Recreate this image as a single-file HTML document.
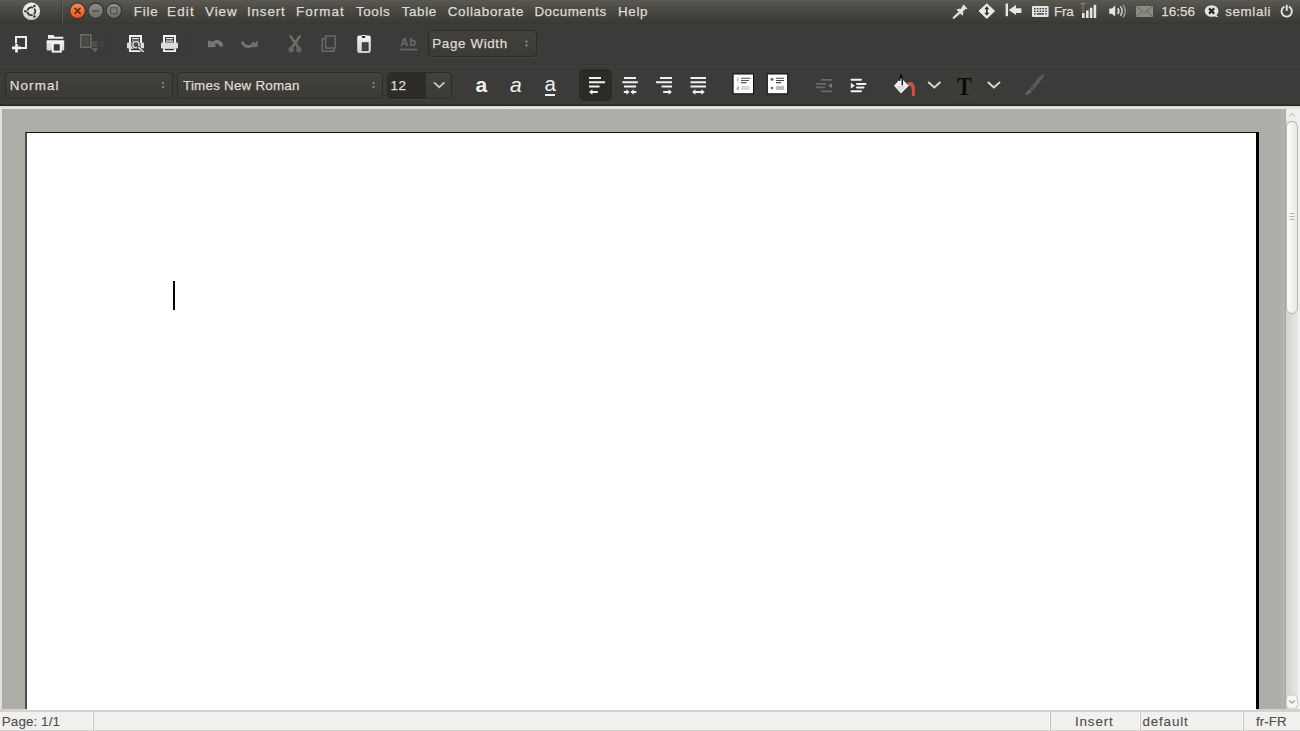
<!DOCTYPE html>
<html><head><meta charset="utf-8"><title>AbiWord</title>
<style>
html,body{margin:0;padding:0;width:1300px;height:731px;overflow:hidden;background:#3c3b37;}
body{position:relative;font-family:"Liberation Sans",sans-serif;font-size:13.4px;color:#dfdbd2;}
.a{position:absolute;}
.t{position:absolute;white-space:nowrap;line-height:20px;height:20px;-webkit-text-stroke:.25px currentColor;}
#panel{left:0;top:0;width:1300px;height:24px;background:linear-gradient(#5a5950 0,#4c4b46 8px,#42413c 16px,#393834 24px);}
#tb{left:0;top:24px;width:1300px;height:82px;background:#3b3b39;}
.combo{position:absolute;border:1px solid #2c2b28;border-radius:4px;background:linear-gradient(#42413c,#3b3a36);box-sizing:border-box;box-shadow:0 1px 0 rgba(255,255,255,.05);}
.sep{position:absolute;width:1px;background:#373735;box-shadow:1px 0 0 #3f3f3d;}
#doc{left:0;top:109px;width:1286px;height:601px;background:linear-gradient(#b1aeac,#aeada8 3px);}
#page{left:25px;top:132px;width:1231px;height:578px;background:#fff;border-left:2px solid #4d4c48;border-top:1px solid #111;box-sizing:border-box;}
#status{left:0;top:712px;width:1300px;height:19px;background:#f1f0ee;color:#4c4c4c;}
</style></head><body>
<div class="a" id="panel"></div>
<div class="a" id="tb"></div>
<!-- menu -->
<div id="menu">
<span class="t" style="left:133.8px;top:2.4px;letter-spacing:0.757px">File</span>
<span class="t" style="left:167px;top:2.4px;letter-spacing:1.215px">Edit</span>
<span class="t" style="left:205px;top:2.4px;letter-spacing:0.963px">View</span>
<span class="t" style="left:247px;top:2.4px;letter-spacing:0.846px">Insert</span>
<span class="t" style="left:296px;top:2.4px;letter-spacing:1.062px">Format</span>
<span class="t" style="left:356px;top:2.4px;letter-spacing:0.609px">Tools</span>
<span class="t" style="left:401.8px;top:2.4px;letter-spacing:0.584px">Table</span>
<span class="t" style="left:447.7px;top:2.4px;letter-spacing:0.716px">Collaborate</span>
<span class="t" style="left:534.4px;top:2.4px;letter-spacing:0.496px">Documents</span>
<span class="t" style="left:618px;top:2.4px;letter-spacing:0.636px">Help</span>
</div>
<!-- panel right text -->
<span class="t" style="left:1054px;top:2.4px;letter-spacing:-0.219px">Fra</span>
<span class="t" style="left:1161.3px;top:2.4px;letter-spacing:0.059px">16:56</span>
<span class="t" style="left:1225.3px;top:2.4px;letter-spacing:0.584px">semlali</span>
<svg class="a" style="left:0;top:0" width="1300" height="24" viewBox="0 0 1300 24">
<defs>
<linearGradient id="gw" x1="0" y1="0" x2="0" y2="1"><stop offset="0" stop-color="#f4f4f2"/><stop offset="1" stop-color="#cfcfcc"/></linearGradient>
<linearGradient id="gc" x1="0" y1="0" x2="0" y2="1"><stop offset="0" stop-color="#f58a5a"/><stop offset="1" stop-color="#e9561c"/></linearGradient>
<linearGradient id="gg" x1="0" y1="0" x2="0" y2="1"><stop offset="0" stop-color="#8d8c86"/><stop offset="1" stop-color="#6d6c66"/></linearGradient>
</defs>
<!-- ubuntu logo -->
<circle cx="31.4" cy="11.3" r="8.7" fill="url(#gw)"/>
<circle cx="31.4" cy="11.3" r="3.9" fill="none" stroke="#33322e" stroke-width="1.7" stroke-dasharray="6.9 1.268" stroke-dashoffset="3.45"/>
<circle cx="25.400" cy="11.3" r="1.25" fill="#33322e"/><circle cx="34.400" cy="6.100" r="1.25" fill="#33322e"/><circle cx="34.400" cy="16.500" r="1.25" fill="#33322e"/>
<rect x="61" y="0" width="1" height="24" fill="#3a3934" opacity=".6"/><rect x="62" y="0" width="1" height="24" fill="#66655c" opacity=".6"/>
<!-- window buttons -->
<circle cx="77.5" cy="10.8" r="8.2" fill="#35342f"/><circle cx="77.5" cy="10.8" r="7.2" fill="url(#gc)"/>
<path d="M75 8.3l5 5M80 8.3l-5 5" stroke="#5a2410" stroke-width="1.6" stroke-linecap="round"/>
<circle cx="95.7" cy="10.8" r="8.2" fill="#35342f"/><circle cx="95.7" cy="10.8" r="7.1" fill="url(#gg)"/>
<rect x="92.2" y="10" width="7" height="1.8" fill="#55544f"/>
<circle cx="113.8" cy="10.8" r="8.2" fill="#35342f"/><circle cx="113.8" cy="10.8" r="7.1" fill="url(#gg)"/>
<rect x="110.6" y="7.8" width="6.4" height="6" fill="none" stroke="#55544f" stroke-width="1.3"/>
<!-- pin -->
<g fill="#e4e2dc"><path d="M952.500 18.900l.5-1.800 5.600-5.400 1.700 1.700-5.800 5.100z"/><path d="M956.400 9.600c1.400-1 3-1.200 4.200-.6l2.400-3.400c-.4-.6-.2-1.200 .4-1.400l4 4.200c-.2 .6-.8 .8-1.400 .4l-3.200 2.600c.8 1.400 .6 3-.4 4.400z"/></g>
<!-- diamond -->
<path d="M986.800 3.800l7.800 7.200-7.800 7.400-7.800-7.400z" fill="#ebe9e4" stroke="#ebe9e4" stroke-width="1" stroke-linejoin="round"/>
<path d="M986.800 6.200l2.400 3h-1.600v3.600h1.600l-2.400 3-2.400-3h1.600v-3.600h-1.600z" fill="#2b2a26"/>
<!-- |<- -->
<rect x="1005.600" y="3.600" width="2.400" height="12.600" fill="#e9e7e2"/>
<path d="M1008.600 10l7.400-5v3.200h5.400v4.800h-5.400v2z" fill="#e9e7e2"/>
<!-- keyboard -->
<rect x="1032" y="6" width="16.600" height="11" rx="1" fill="#e6e4de"/>
<g fill="#3a3934"><rect x="1034" y="8" width="1.600" height="1.400"/><rect x="1036.800" y="8" width="1.600" height="1.400"/><rect x="1039.600" y="8" width="1.600" height="1.400"/><rect x="1042.400" y="8" width="1.600" height="1.400"/><rect x="1045.200" y="8" width="1.600" height="1.400"/>
<rect x="1034" y="10.600" width="1.600" height="1.400"/><rect x="1036.800" y="10.600" width="1.600" height="1.400"/><rect x="1039.600" y="10.600" width="1.600" height="1.400"/><rect x="1042.400" y="10.600" width="1.600" height="1.400"/><rect x="1045.200" y="10.600" width="1.600" height="1.400"/>
<rect x="1034" y="13.200" width="1.600" height="1.400"/><rect x="1036.800" y="13.200" width="7.200" height="1.400"/><rect x="1045.200" y="13.200" width="1.600" height="1.400"/></g>
<!-- signal -->
<g fill="#e6e4de"><rect x="1082" y="13" width="2.600" height="5"/><rect x="1086" y="10.400" width="2.600" height="7.600"/><rect x="1089.800" y="7.800" width="2.600" height="10.200"/><rect x="1093.600" y="4.800" width="2.600" height="13.200"/></g>
<path d="M1080.500 3.500h5M1083 3.500v9" stroke="#8a8982" stroke-width="1" fill="none"/>
<!-- speaker -->
<path d="M1109.200 8.400h2.600l3.400-2.800v11l-3.400-2.800h-2.600z" fill="#e6e4de"/>
<path d="M1117.800 8.200q2 2.900 0 5.800" stroke="#e6e4de" stroke-width="1.600" fill="none"/>
<path d="M1120.400 6.400q3.400 4.700 0 9.400" stroke="#d0cec8" stroke-width="1.500" fill="none"/>
<path d="M1123 4.800q4.600 6.300 0 12.600" stroke="#a09e98" stroke-width="1.300" fill="none"/>
<!-- mail -->
<rect x="1136" y="6" width="17" height="11" fill="#8b8a83"/>
<path d="M1136.500 6.500l8 6.500 8-6.500M1136.500 16.500l5.500-5M1152.500 16.500l-5.500-5" stroke="#65645e" stroke-width="1" fill="none"/>
<!-- chat -->
<path d="M1216 14.500l2.600 3-4.400-1.200z" fill="#e6e4de"/>
<ellipse cx="1211.600" cy="11" rx="6" ry="4.900" fill="#e6e4de" stroke="#e6e4de" stroke-width="1.800"/>
<path d="M1209 8.400l5.200 5.200M1214.200 8.400l-5.200 5.200" stroke="#2a2925" stroke-width="2.200"/>
<!-- power -->
<path d="M1283.900 7a5.200 5.200 0 1 0 5.600 0" stroke="#e6e4de" stroke-width="1.900" fill="none" stroke-linecap="round"/>
<rect x="1285.800" y="4.800" width="1.900" height="6.200" rx=".8" fill="#e6e4de"/>
</svg>

<!-- toolbar 1 -->
<div class="sep" style="left:111px;top:32px;height:24px"></div>
<div class="sep" style="left:191px;top:32px;height:24px"></div>
<div class="sep" style="left:272px;top:32px;height:24px"></div>
<div class="combo" style="left:428px;top:30px;width:109px;height:27px"></div>
<span class="t" style="left:432.3px;top:34.4px;letter-spacing:0.625px">Page Width</span>
<!-- toolbar 2 -->
<div class="a" style="left:0;top:64px;width:1300px;height:1px;background:#363534"></div>
<div class="a" style="left:0;top:65px;width:1300px;height:1px;background:#3f3f3c"></div>
<div class="combo" style="left:5px;top:72px;width:168px;height:27px"></div>
<span class="t" style="left:9.8px;top:75.7px;letter-spacing:1.104px">Normal</span>
<div class="combo" style="left:177px;top:72px;width:206px;height:27px"></div>
<span class="t" style="left:183px;top:75.7px;letter-spacing:0.221px">Times New Roman</span>
<div class="combo" style="left:387px;top:72px;width:65px;height:27px"></div>
<div class="a" style="left:388px;top:73px;width:38px;height:25px;background:#2d2c29;border-radius:3px 0 0 3px"></div>
<span class="t" style="left:390.5px;top:75.7px;letter-spacing:0.453px">12</span>
<div class="a" style="left:579px;top:69px;width:33px;height:32px;background:#2b2a27;border-radius:5px"></div>
<div class="sep" style="left:722px;top:74px;height:24px"></div>
<div class="sep" style="left:803px;top:74px;height:24px"></div>
<div class="sep" style="left:880px;top:74px;height:24px"></div>
<div class="sep" style="left:1012px;top:74px;height:24px"></div>
<!-- TB-START --><svg class="a" style="left:0;top:24px" width="1300" height="82" viewBox="0 24 1300 82">
<defs>
<linearGradient id="gi" x1="0" y1="0" x2="0" y2="1"><stop offset="0" stop-color="#f6f6f6"/><stop offset="1" stop-color="#cdcdcd"/></linearGradient>
</defs>
<!-- new -->
<path d="M16 43.500v-6.500h10v11h-5" fill="none" stroke="#ededed" stroke-width="2"/>
<path d="M12 47.900h9M16.500 44v8.500" stroke="#f2f2f2" stroke-width="2.600" fill="none"/>
<!-- open -->
<path d="M48 35h5.500l1 1.700h8.800v2.100h-15.300z" fill="#efefef"/>
<rect x="46.600" y="40.300" width="17.600" height="10.300" rx="1" fill="url(#gi)"/>
<rect x="52.750" y="43.250" width="8" height="8.400" fill="#3a3a37" stroke="#f2f2f2" stroke-width="2"/>
<rect x="51.750" y="41.300" width="10" height="1.500" fill="#f2f2f2"/>
<path d="M47.500 44h3.500M47.500 46h3.500" stroke="#d0d0d0" stroke-width=".7"/>
<!-- save disabled -->
<g stroke="#6b6b68" fill="none"><rect x="80.800" y="34.800" width="10" height="12.400" stroke-width="1.600"/>
<path d="M92 42h5.200M92 44h5.200M92 46h5.200" stroke-width=".9"/><path d="M98.500 42h5M98.500 44h5M98.500 46h5" stroke-width=".9" stroke-dasharray="1 1" opacity=".55"/></g>
<rect x="82.500" y="36.500" width="6.600" height="9" fill="#4a4a47"/>
<path d="M91.400 48h6.800l-3.400 4.600z" fill="#62625f"/>
<!-- print preview --><g>
<rect x="129" y="35" width="13" height="8" fill="#f1f1f1"/>
<rect x="131" y="37" width="9" height="6" fill="#3a3a37"/>
<rect x="132" y="38" width="7" height="1.200" fill="#f0f0f0"/><rect x="132" y="40.500" width="7" height="1.200" fill="#f0f0f0"/>
<rect x="127" y="42.500" width="17" height="6" rx="1.300" fill="#dcdcdc"/>
<rect x="129" y="48.400" width="13" height="3.600" fill="#f1f1f1"/>
<rect x="131" y="49" width="9" height="1.200" fill="#2e2e2c"/>

<circle cx="136" cy="44.700" r="4.700" fill="#3a3a37"/>
<circle cx="136" cy="44.700" r="3.100" fill="#4a4a48" stroke="#d6d6d6" stroke-width="1.500"/>
<path d="M138.800 47.600l4.400 3.900" stroke="#3a3a37" stroke-width="3.200" stroke-linecap="round"/>
<path d="M138.800 47.600l4.400 3.900" stroke="#e4e4e4" stroke-width="1.600" stroke-linecap="round"/>
</g>
<!-- print --><g>
<rect x="163" y="35" width="13" height="8" fill="#f1f1f1"/>
<rect x="165" y="37" width="9" height="6" fill="#3a3a37"/>
<rect x="166" y="38" width="7" height="1.200" fill="#f0f0f0"/><rect x="166" y="40.500" width="7" height="1.200" fill="#f0f0f0"/>
<rect x="161" y="42.500" width="17" height="6" rx="1.300" fill="#dcdcdc"/>
<rect x="163" y="48.400" width="13" height="3.600" fill="#f1f1f1"/>
<rect x="165" y="49" width="9" height="1.200" fill="#2e2e2c"/>
</g>
<!-- undo -->
<path d="M208 47.200v-6.800l4.600 1.400c2.800-2.400 6.400-2.200 8.600-.2 1.400 1.400 2 3.200 2 5l-3.600 .2c-.2-1.400-.8-2.600-2.200-3-1.400-.4-2.600 .4-2.600 .4l1.400 2.800z" fill="#777775"/>
<!-- redo -->
<path d="M257.600 40v7l-8.600 .2l1.800-1.800c-2 .6-4 .2-5.400-1-1-.8-1.600-1.800-1.800-3l-2.200 .8c.2 2.200 1.600 4 3.800 5 3 1.200 6.400 .6 8.600-1.800z" fill="#727270"/>
<path d="M242.200 41.600c1 3.600 5 6 9.600 4l2.400-3.200" stroke="#727270" stroke-width="2.600" fill="none"/>
<!-- cut -->
<g stroke="#6d6d6a" fill="none" stroke-linecap="round"><path d="M290.400 36.200l8 11.600" stroke-width="2.500"/><path d="M299.800 36.200l-8 11.600" stroke-width="2.500"/></g>
<ellipse cx="291.200" cy="49.400" rx="2.600" ry="2.800" fill="#656563"/><ellipse cx="298.900" cy="49.400" rx="2.600" ry="2.800" fill="#656563"/>
<!-- copy -->
<g stroke="#6a6a68" fill="none" stroke-width="1.500"><path d="M325 38.800h-2.800v12.400h11.600v-2.600"/><rect x="325.600" y="36" width="9.600" height="12"/></g>
<!-- paste -->
<rect x="357.200" y="35.600" width="13.600" height="17.400" rx="2.200" fill="url(#gi)"/>
<path d="M360 37.500q3.800-5.500 7.600 0z" fill="#f2f2f2"/>
<ellipse cx="363.600" cy="37" rx="1.900" ry="1.100" fill="#111"/>
<rect x="361.800" y="42.200" width="6.800" height="8.800" fill="#3d3d3a"/>
<path d="M363 44.500h4M363 46.500h4M363 48.500h3" stroke="#555552" stroke-width=".9"/>
<!-- spell wave -->
<path d="M400.500 50.200l1.300-1.200 1.300 1.200 1.300-1.200 1.300 1.200 1.300-1.200 1.300 1.200 1.300-1.200 1.300 1.200 1.300-1.200 1.300 1.200 1.300-1.200 1.300 1.200 1.300-1.200" stroke="#676765" stroke-width="1.300" fill="none"/>
<!-- combo arrows -->
<g fill="#8f8e88"><circle cx="526.500" cy="41.600" r="1.100"/><circle cx="526.500" cy="45.400" r="1.100"/>
<circle cx="163" cy="83.200" r="1.100"/><circle cx="163" cy="87" r="1.100"/>
<circle cx="373.500" cy="83.200" r="1.100"/><circle cx="373.500" cy="87" r="1.100"/></g>
<!-- size chevron -->
<path d="M434 82.400l5.200 4.800 5.200-4.800" stroke="#c9c7c1" stroke-width="1.800" fill="none"/>
<!-- align left -->
<g stroke="#f0f0f0" stroke-width="2" fill="none"><path d="M589 78h12M589 82.200h16M589 86.400h10.500"/></g>
<path d="M589 92l3.400-2.800v1.900h5.400v1.800h-5.400v1.900z" fill="#f0f0f0"/>
<!-- align center -->
<g stroke="#f0f0f0" stroke-width="2" fill="none"><path d="M624 78h12M622.400 82.200h15.400M624 86.400h12"/></g>
<path d="M629.600 92l-3.200-2.800v1.900h-2.600v1.800h2.600v1.900zM630.400 92l3.200-2.800v1.900h2.800v1.800h-2.800v1.900z" fill="#f0f0f0"/>
<!-- align right -->
<g stroke="#f0f0f0" stroke-width="2" fill="none"><path d="M660 78h12M656 82.200h16M661.500 86.400h10.500"/></g>
<path d="M672 92l-3.400-2.800v1.900h-5.400v1.800h5.400v1.900z" fill="#f0f0f0"/>
<!-- justify -->
<g stroke="#f0f0f0" stroke-width="2" fill="none"><path d="M690.500 78h15.500M690.500 82.200h15.500M690.500 86.400h15.500"/></g>
<path d="M692 92l3.400-2.800v1.900h6v-1.900l3.400 2.800-3.400 2.800v-1.900h-6v1.900z" fill="#f0f0f0"/>
<!-- numbered list -->
<rect x="733.100" y="74" width="20.400" height="19.800" fill="#fcfcfc" stroke="#0c0c0c" stroke-width="1"/>
<path d="M741 78.300h9.500M741 80.500h8M741 82.600h5.500" stroke="#55555a" stroke-width="1.100"/>
<path d="M741 87h8.500M741 89h8.500" stroke="#b4b4b4" stroke-width="1.200"/>
<path d="M737.800 77.500v4M737 87h1.600v1.200h-1.600v1.200h1.800" stroke="#9a9a9a" stroke-width="1" fill="none"/>
<!-- bullet list -->
<rect x="767.300" y="74" width="20.400" height="19.800" fill="#fcfcfc" stroke="#0c0c0c" stroke-width="1"/>
<path d="M776 78.300h8M776 80.500h8M776 82.600h5" stroke="#48484a" stroke-width="1.100"/>
<path d="M776 87h8M776 89h8" stroke="#a8a8a8" stroke-width="1.300"/>
<circle cx="772" cy="79.400" r="1.400" fill="#5a5a5a"/><circle cx="772" cy="88" r="1.300" fill="#6a6a6a"/>
<!-- unindent disabled -->
<g stroke="#6a6a68" stroke-width="1.700" fill="none"><path d="M821 79.800h11M816 83.900h10M816 87.400h9M821 91.300h11"/></g>
<path d="M832 83v5.200l-4.200-2.600z" fill="#757573"/>
<!-- indent -->
<g stroke="#f2f2f2" stroke-width="2" fill="none" stroke-linecap="round"><path d="M851.500 79.800h9.500M857 83.900h8.500M857 87.400h6.500M851.500 91.300h9.500"/></g>
<path d="M850.800 82.800v5.800l4-2.900z" fill="#f2f2f2"/>
<!-- paint bucket -->
<path d="M907.500 82.500c4-1.800 7 .5 7.200 4.500l.3 9h-3l-.3-7.500c0-2-1.600-3-3.600-2z" fill="#cf5340"/>
<path d="M901 78l7.800 7.800-7.800 7.600-7-7.600z" fill="#f1f1f1"/>
<path d="M896 86l5 5.500 5-5.500z" fill="#dcdcdc"/>
<path d="M899.200 81c0-4 .8-7.600 1.800-7.600s2 3.600 2 7.600v4.200h-1.400v-4.200c0-2-.3-4-.6-4s-.5 2-.5 4z" fill="#111"/>
<!-- chevrons -->
<path d="M928.200 82l6.100 5.400 6.100-5.400" stroke="#dcdad5" stroke-width="1.900" fill="none"/>
<path d="M987.800 82l6.100 5.400 6.100-5.400" stroke="#dcdad5" stroke-width="1.900" fill="none"/>
<!-- brush disabled -->
<path d="M1025.400 95.400c.4-2.600 1.400-4.400 3-5.600l3.600 1.400c-1.600 2-3.800 3.600-6.600 4.200z" fill="#626260"/>
<path d="M1029 89.400l9.800-11.800c1.600-1.900 3.600-3.600 4.800-3.200 .9 .7 .1 2.600-1.300 4.400l-9.900 11.900z" fill="#5a5a58"/>
<path d="M1031.500 86.500l3 2.400" stroke="#474745" stroke-width="1"/>
</svg>
<span class="t" id="ab" style="left:400.3px;top:31.6px;font-weight:bold;font-size:11.4px;letter-spacing:.7px;color:#696967">Ab</span>
<span class="t ic" id="ba" style="left:475.4px;top:69.5px;-webkit-text-stroke:0;height:30px;line-height:30px;font-weight:bold;font-size:21px;color:#f1f1f1">a</span>
<span class="t ic" id="ia" style="left:510px;top:69.5px;-webkit-text-stroke:0;height:30px;line-height:30px;font-style:italic;font-size:21px;color:#f1f1f1">a</span>
<span class="t ic" id="ua" style="left:544.5px;top:68.5px;-webkit-text-stroke:0;height:30px;line-height:30px;font-size:20.500px;color:#f1f1f1">a</span>
<div class="a" style="left:545px;top:94px;width:10px;height:1.500px;background:#f1f1f1"></div>
<div class="a" style="left:952px;top:73px;width:24px;height:24px;background:#45453a;opacity:.35"></div>
<span class="t ic" id="tt" style="-webkit-text-stroke:0;left:957.3px;top:71.5px;height:30px;line-height:30px;font-family:'Liberation Serif',serif;font-weight:bold;font-size:26px;color:#0a0a0a;transform-origin:0 0;transform:scaleX(.84)">T</span>
<!-- TB-END -->
<!-- document -->
<div class="a" style="left:0;top:104px;width:1300px;height:2px;background:linear-gradient(#333331,#262624)"></div>
<div class="a" style="left:0;top:106px;width:1300px;height:3px;background:linear-gradient(#c9c8c5,#e8e7e4 40%,#e2e1de)"></div>
<div class="a" id="doc"></div>
<div class="a" style="left:0;top:109px;width:2px;height:601px;background:#e2e0dc"></div>
<div class="a" id="page"></div>
<div class="a" style="left:1256px;top:132px;width:3px;height:578px;background:#000"></div>
<div class="a" style="left:173px;top:281px;width:2px;height:29px;background:#000"></div>
<!-- scrollbar -->
<div class="a" style="left:1280px;top:109px;width:6px;height:601px;background:linear-gradient(90deg,#aeada8,#b6b4b0 60%,#a9a7a4)"></div>
<div class="a" style="left:1286px;top:109px;width:14px;height:601px;background:linear-gradient(90deg,#d4d2ce,#ecebe9)"></div>
<div class="a" style="left:1286px;top:121px;width:12px;height:193px;box-sizing:border-box;border:1px solid #b9b6b0;border-radius:6px;background:linear-gradient(90deg,#fdfdfd,#e9e8e6)"></div>
<svg class="a" style="left:1286px;top:109px" width="14" height="601" viewBox="0 0 14 601">
<rect x="0" y="0" width="12" height="12" fill="#efeeec"/>
<path d="M3.200 7.200l2.800-2.600 2.800 2.600" stroke="#c9c7c3" stroke-width="1.300" fill="none"/>
<rect x="0.500" y="586" width="11" height="13.500" rx="4" fill="#f6f5f4" stroke="#d2d0cc" stroke-width="1"/>
<path d="M3.200 591.500l2.800 2.600 2.800-2.600" stroke="#a8a6a1" stroke-width="1.300" fill="none"/>
<g stroke="#b5b3ae" stroke-width="1"><path d="M3.500 104.500h4.800M3.500 107.500h4.800M3.500 110.500h4.800"/></g>
<rect x="12" y="0" width="2" height="601" fill="#f1f0ee"/>
</svg>
<!-- status -->
<div class="a" style="left:0;top:709px;width:1300px;height:3px;background:#d3d2cf"></div><div class="a" style="left:27px;top:709px;width:1229px;height:1px;background:#fff"></div>
<div class="a" id="status"></div>
<div class="a" style="left:92px;top:712px;width:1px;height:18px;background:#fbfbfa"></div><div class="a" style="left:93px;top:712px;width:1px;height:18px;background:#c6c4bf"></div><div class="a" style="left:1049px;top:712px;width:1px;height:18px;background:#fbfbfa"></div><div class="a" style="left:1050px;top:712px;width:1px;height:18px;background:#c6c4bf"></div><div class="a" style="left:1139px;top:712px;width:1px;height:18px;background:#fbfbfa"></div><div class="a" style="left:1140px;top:712px;width:1px;height:18px;background:#c6c4bf"></div><div class="a" style="left:1242px;top:712px;width:1px;height:18px;background:#fbfbfa"></div><div class="a" style="left:1243px;top:712px;width:1px;height:18px;background:#c6c4bf"></div>
<span class="t" style="left:1.8px;top:711.8px;color:#4c4c4c;-webkit-text-stroke:.1px currentColor;letter-spacing:0.102px">Page: 1/1</span>
<span class="t" style="left:1075px;top:711.8px;color:#4c4c4c;-webkit-text-stroke:.1px currentColor;letter-spacing:0.846px">Insert</span>
<span class="t" style="left:1142.5px;top:711.8px;color:#4c4c4c;-webkit-text-stroke:.1px currentColor;letter-spacing:0.836px">default</span>
<span class="t" style="left:1256px;top:711.8px;color:#4c4c4c;-webkit-text-stroke:.1px currentColor;letter-spacing:0.045px">fr-FR</span>
<div class="a" style="left:0;top:730px;width:1300px;height:1px;background:#d4d2ce"></div>
</body></html>
